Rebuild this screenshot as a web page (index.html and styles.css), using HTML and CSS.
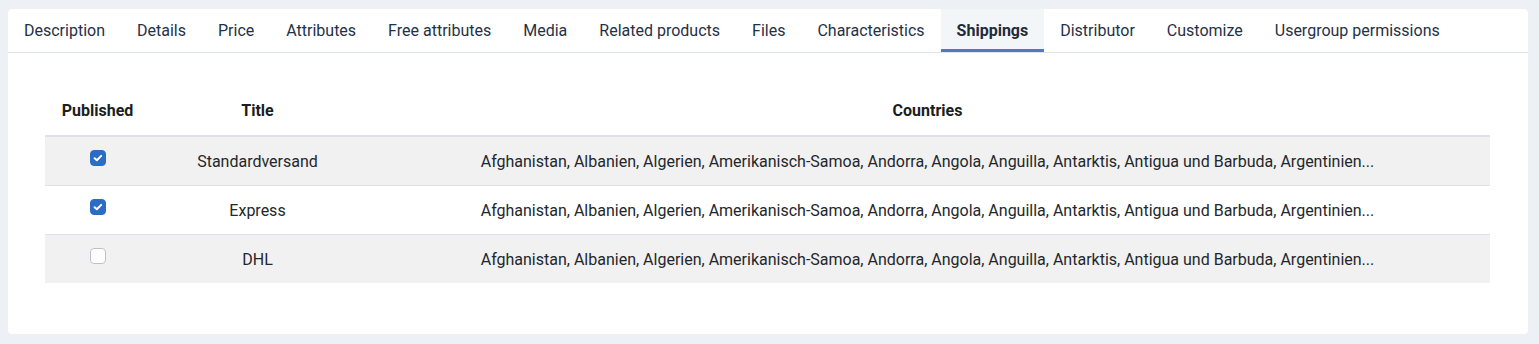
FILE: index.html
```html
<!DOCTYPE html>
<html>
<head>
<meta charset="utf-8">
<link rel="stylesheet" href="styles.css">
</head>
<body>
<div class="card">
  <nav class="tabs">
    <a class="tab">Description</a>
    <a class="tab">Details</a>
    <a class="tab">Price</a>
    <a class="tab">Attributes</a>
    <a class="tab">Free attributes</a>
    <a class="tab">Media</a>
    <a class="tab">Related products</a>
    <a class="tab">Files</a>
    <a class="tab">Characteristics</a>
    <a class="tab active">Shippings</a>
    <a class="tab">Distributor</a>
    <a class="tab">Customize</a>
    <a class="tab">Usergroup permissions</a>
  </nav>
  <div class="content">
    <table class="grid">
      <thead>
        <tr><th class="c1">Published</th><th class="c2">Title</th><th class="c3">Countries</th></tr>
      </thead>
      <tbody>
        <tr class="odd">
          <td><span class="cb on"><svg viewBox="0 0 16 16" width="16" height="16"><path d="M4.6 8.2 L6.9 10.3 L11.2 5.9" fill="none" stroke="#fff" stroke-width="2" stroke-linecap="round" stroke-linejoin="round"/></svg></span></td>
          <td>Standardversand</td>
          <td>Afghanistan, Albanien, Algerien, Amerikanisch-Samoa, Andorra, Angola, Anguilla, Antarktis, Antigua und Barbuda, Argentinien...</td>
        </tr>
        <tr>
          <td><span class="cb on"><svg viewBox="0 0 16 16" width="16" height="16"><path d="M4.6 8.2 L6.9 10.3 L11.2 5.9" fill="none" stroke="#fff" stroke-width="2" stroke-linecap="round" stroke-linejoin="round"/></svg></span></td>
          <td>Express</td>
          <td>Afghanistan, Albanien, Algerien, Amerikanisch-Samoa, Andorra, Angola, Anguilla, Antarktis, Antigua und Barbuda, Argentinien...</td>
        </tr>
        <tr class="odd">
          <td><span class="cb"></span></td>
          <td>DHL</td>
          <td>Afghanistan, Albanien, Algerien, Amerikanisch-Samoa, Andorra, Angola, Anguilla, Antarktis, Antigua und Barbuda, Argentinien...</td>
        </tr>
      </tbody>
    </table>
  </div>
</div>
</body>
</html>
```
FILE: styles.css
```css
html, body {
  margin: 0;
  padding: 0;
  background: #edf1f5;
  font-family: Roboto, "Liberation Sans", sans-serif;
  color: #22262a;
}
body {
  padding: 9px 11px 10px 8px;
}
.card {
  background: #fff;
  border-radius: 4px;
  height: 325px;
  box-sizing: border-box;
}
.tabs {
  display: flex;
  border-bottom: 1px solid #dfe5ed;
  height: 43px;
  box-sizing: content-box;
}
.tab {
  display: flex;
  align-items: center;
  padding: 0 16px;
  font-size: 16px;
  color: #1f3147;
  box-sizing: border-box;
  height: 43px;
  border-bottom: 3px solid transparent;
  padding-top: 3px;
  cursor: pointer;
}
.tab.active {
  background: #f3f6f9;
  border-bottom-color: #4b7cc0;
  font-weight: 700;
  color: #1f2b3c;
}
.content {
  padding: 35px 38px 0 37px;
}
.grid {
  width: 100%;
  border-collapse: collapse;
  font-size: 16px;
}
.grid th {
  font-weight: 700;
  color: #1a1d21;
  height: 45px;
  border-bottom: 2px solid #dee2e6;
  padding: 0 0 2px 0;
  text-align: center;
  vertical-align: middle;
}
.c1 { width: 105px; }
.c2 { width: 215px; }
.grid td {
  height: 48px;
  padding: 0;
  text-align: center;
  vertical-align: middle;
  border-bottom: 1px solid #dee2e6;
  color: #23272b;
}
.grid tbody tr:last-child td { border-bottom: none; }
.grid tr.odd td { background: #f1f1f1; }
.cb {
  display: inline-block;
  width: 16px;
  height: 16px;
  border-radius: 4px;
  border: 1px solid #bfc3c7;
  background: #fff;
  box-sizing: border-box;
  vertical-align: middle;
  position: relative;
  top: -4px;
}
.cb.on {
  background: #2b6cc4;
  border-color: #2b6cc4;
}
.cb svg {
  display: block;
  margin: -1px;
  width: 16px;
  height: 16px;
}
```
